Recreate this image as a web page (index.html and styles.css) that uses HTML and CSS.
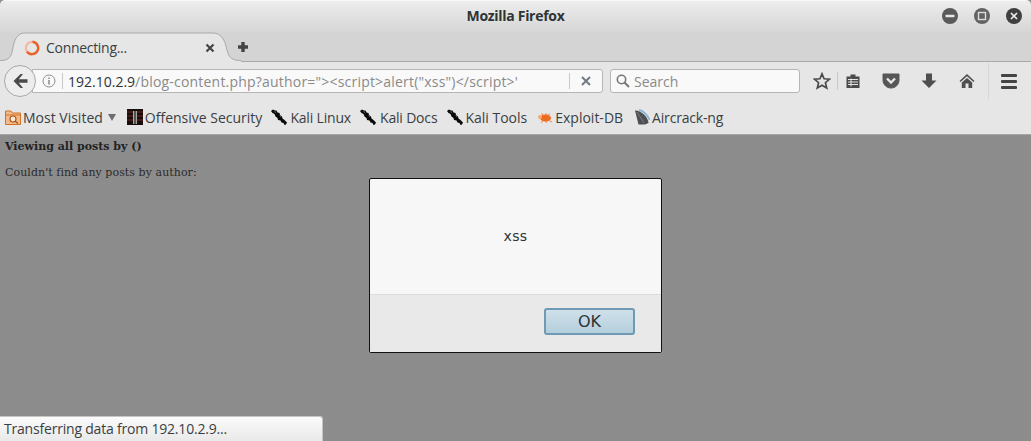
FILE: index.html
```html
<!DOCTYPE html>
<html lang="en">
<head>
<meta charset="utf-8">
<title>Mozilla Firefox</title>
<link rel="stylesheet" href="styles.css">
</head>
<body>
<svg class="defs" width="0" height="0" aria-hidden="true">
  <symbol id="kali" viewBox="0 0 16 16">
    <path d="M0 2 2 0.500 4 1.500 5.500 1.500 6.500 3.500 8.500 4 9 6 11 7.500 11.500 9.500 13.500 11 16 13.500 15 15.500 13.500 16 12.500 14 10.500 13.500 9.500 11.500 7 11 6.500 9 4.500 7.500 3.500 5 1.500 4Z" fill="#0a0a0a"/>
    <path d="M3.500 2.500 5 3.500M9 6.500 10 8" stroke="#888" stroke-width=".8" fill="none"/>
  </symbol>
</svg>
<div class="window">
  <header class="titlebar">
    <div class="title">Mozilla Firefox</div>
    <div class="winbtns">
      <span class="winbtn"><svg viewBox="0 0 16 16" width="16" height="16"><circle cx="8" cy="8" r="8" fill="#5a5a5a"/><rect x="3.500" y="6.800" width="9" height="2.400" rx=".6" fill="#e6e6e6"/></svg></span>
      <span class="winbtn"><svg viewBox="0 0 16 16" width="16" height="16"><circle cx="8" cy="8" r="8" fill="#626262"/><rect x="4.500" y="4.500" width="7" height="7" fill="none" stroke="#dcdcdc" stroke-width="1.400"/></svg></span>
      <span class="winbtn"><svg viewBox="0 0 16 16" width="16" height="16"><circle cx="8" cy="8" r="8" fill="#404040"/><path d="M5 5 11 11M11 5 5 11" stroke="#eee" stroke-width="1.700"/></svg></span>
    </div>
  </header>
  <div class="tabstrip">
    <div class="tab">
      <svg class="tabshape" viewBox="0 0 242 30" width="242" height="30"><path d="M0 28.500C8 28.500 11 26 12.500 18 14 8 17 1 25 1H213C221 1 225 8 227 18 229 26 232 28.500 241 28.500V30H0Z" fill="#e6e6e6"/><path d="M0 28.500C8 28.500 11 26 12.500 18 14 8 17 1 25 1H213C221 1 225 8 227 18 229 26 232 28.500 241 28.500" fill="none" stroke="#a9a9a9"/></svg>
      <svg class="spinner" viewBox="0 0 16 16" width="16" height="16"><circle cx="8" cy="8" r="6.200" fill="none" stroke="#f0b9a0" stroke-width="2.200"/><path d="M8.500 1.800A6.200 6.200 0 1 1 3 11.700" fill="none" stroke="#e8622c" stroke-width="2.400"/></svg>
      <span class="tablabel">Connecting...</span>
      <svg class="tabclose" viewBox="0 0 10 10" width="10" height="10"><path d="M1.500 1.500 8.500 8.500M8.500 1.500 1.500 8.500" stroke="#444" stroke-width="2.200"/></svg>
    </div>
    <svg class="newtab" viewBox="0 0 12 12" width="12" height="12"><path d="M4.300 1H7.700V4.300H11V7.700H7.700V11H4.300V7.700H1V4.300H4.300Z" fill="#444"/></svg>
  </div>
  <nav class="navbar">
    <div class="backbtn"><svg viewBox="0 0 18 18" width="18" height="18"><path d="M9.500 2 2.500 9 9.500 16H12L7.800 10.800H16.500V7.200H7.800L12 2Z" fill="#4a4a4a"/></svg></div>
    <div class="urlbar">
      <svg class="infoicon" viewBox="0 0 14 14" width="14" height="14"><circle cx="7" cy="7" r="6" fill="none" stroke="#8e8e8e"/><rect x="6.300" y="6" width="1.400" height="4.500" fill="#808080"/><rect x="6.300" y="3.500" width="1.400" height="1.500" fill="#808080"/></svg>
      <span class="vsep"></span>
      <div class="url"><span class="host">192.10.2.9</span>/blog-content.php?author="&gt;&lt;script&gt;alert("xss")&lt;/script&gt;'</div>
      <span class="vsep"></span>
      <svg class="urlclose" viewBox="0 0 10 10" width="10" height="10"><path d="M1 1 9 9M9 1 1 9" stroke="#6f7a84" stroke-width="2"/></svg>
    </div>
    <div class="searchbar">
      <svg viewBox="0 0 14 14" width="14" height="14"><circle cx="5.500" cy="5.500" r="4.200" fill="none" stroke="#777" stroke-width="1.600"/><path d="M8.500 8.500 13 13" stroke="#777" stroke-width="2"/></svg>
      <span class="searchtext">Search</span>
    </div>
    <div class="tools">
      <svg class="t-star" viewBox="0 0 18 18" width="18" height="18"><path d="M9 1.800 11.100 6.800 16.500 7.200 12.400 10.700 13.700 16 9 13.200 4.300 16 5.600 10.700 1.500 7.200 6.900 6.800Z" fill="none" stroke="#4a4a4a" stroke-width="1.700"/></svg>
      <span class="t-sep"></span>
      <svg class="t-list" viewBox="0 0 16 16" width="16" height="16"><path d="M1.500 3.500H5.500V1.500H10.500V3.500H14.500V15H1.500Z" fill="#4a4a4a"/><path d="M3 6.500H13M3 9H13M3 11.500H13M6 5.500V13.500" stroke="#e6e6e6"/></svg>
      <svg class="t-pocket" viewBox="0 0 18 16" width="18" height="16"><path d="M1 1H17V7C17 12 13 15 9 15 5 15 1 12 1 7Z" fill="#575757" stroke="#575757" stroke-linejoin="round"/><path d="M5 5.500 9 9.500 13 5.500" fill="none" stroke="#e6e6e6" stroke-width="2.400"/></svg>
      <svg class="t-down" viewBox="0 0 16 16" width="16" height="16"><path d="M5 0.500H11V7.500H15.500L8 15 .5 7.500H5Z" fill="#4f4f4f"/></svg>
      <svg class="t-home" viewBox="0 0 16 16" width="16" height="16"><path d="M8 1 .5 8 1.500 9 8 3.200 14.500 9 15.500 8Z" fill="#4f4f4f"/><path d="M2.800 9.500 8 5 13.200 9.500V15H9.500V10.500H6.500V15H2.800Z" fill="#4f4f4f"/></svg>
      <span class="t-sep t-sep-tall"></span>
      <div class="t-menu"><span></span><span></span><span></span></div>
    </div>
  </nav>
  <div class="bookmarks">
    <div class="bm bm-most">
      <svg viewBox="0 0 16 16" width="16" height="16"><path d="M.5 2H6L7.500 4H15.500V15.500H.5Z" fill="#f3b98a" stroke="#cf7428"/><path d="M.5 6H15.500" stroke="#cf7428"/><circle cx="8" cy="10" r="3" fill="#fbe9d8" stroke="#a85514" stroke-width="1.100"/><path d="M10.200 12.200 13 14.500" stroke="#a85514" stroke-width="1.400"/></svg>
      <span>Most Visited</span>
      <svg class="caret" viewBox="0 0 8 7" width="8" height="7"><path d="M0 0H8L4 7Z" fill="#6e6e6e"/></svg>
    </div>
    <div class="bm bm-off">
      <svg viewBox="0 0 16 16" width="16" height="16"><rect width="16" height="16" fill="#1a0d0d"/><path d="M0 3H16M0 7H16M0 11H16" stroke="#6a2a20"/><path d="M6 1H10L9.500 15H8.700L8 7 7.300 15H6.500Z" fill="#111"/><path d="M6.800 2V15M9.200 2V15" stroke="#e8e8e8"/></svg>
      <span>Offensive Security</span>
    </div>
    <div class="bm bm-tight bm-linux"><svg width="16" height="16"><use href="#kali"/></svg><span>Kali Linux</span></div>
    <div class="bm bm-tight bm-docs"><svg width="16" height="16"><use href="#kali"/></svg><span>Kali Docs</span></div>
    <div class="bm bm-tools"><svg width="16" height="16"><use href="#kali"/></svg><span>Kali Tools</span></div>
    <div class="bm bm-exploit">
      <svg viewBox="0 0 16 16" width="16" height="16"><ellipse cx="8.500" cy="9" rx="5.500" ry="3.500" fill="#ee6a1e"/><circle cx="3" cy="8" r="2" fill="#f5a878"/><path d="M6 6 4.500 4M9 6 9 4M11 6 13 5M6 12 4 14M9 12 9.500 14M12 11.500 15 13" stroke="#f08a48"/></svg>
      <span>Exploit-DB</span>
    </div>
    <div class="bm bm-tight bm-air">
      <svg viewBox="0 0 16 16" width="16" height="16"><path d="M1 1.500C6 1 14 7 14.500 14L11 15.500 4.500 15.500Z" fill="#4c5054"/><path d="M5 1C9 1.500 14 6 15.500 11" fill="none" stroke="#8fb4d8" stroke-width="1.800"/><path d="M3 3 10 14" stroke="#7d7d7d"/></svg>
      <span>Aircrack-ng</span>
    </div>
  </div>
  <main class="content">
    <h4 class="heading">Viewing all posts by ()</h4>
    <p class="para">Couldn't find any posts by author:</p>
    <div class="overlay">
      <div class="dialog">
        <div class="dialog-body">xss</div>
        <div class="dialog-foot"><button class="okbtn" type="button">OK</button></div>
      </div>
    </div>
    <div class="status">Transferring data from 192.10.2.9...</div>
  </main>
</div>
</body>
</html>
```
FILE: styles.css
```css
* { box-sizing: border-box; }
html, body { margin: 0; padding: 0; height: 100%; overflow: hidden; background: #8c8c8c; }
body { font-family: "Open Sans", "Noto Sans", sans-serif; color: #3a3a3a; }
.defs { position: absolute; }
.window { display: flex; flex-direction: column; height: 441px; overflow: hidden; }

.titlebar {
  height: 32px; flex: none; position: relative; display: flex; justify-content: center; align-items: center;
  background: linear-gradient(#ededed, #d6d6d6);
  border-top: 1px solid #f8f8f8; border-radius: 5px 5px 0 0;
}
.title { font-size: 14px; font-weight: 700; letter-spacing: -.3px; color: #2e3436; margin-top: -2px; }
.winbtns { position: absolute; right: 9px; top: 7px; display: flex; gap: 16px; }
.winbtn { display: block; width: 16px; height: 16px; line-height: 0; }

.tabstrip {
  height: 30px; flex: none; display: flex; align-items: flex-end;
  background: #d4d4d4; border-bottom: 1px solid #a9a9a9; position: relative; z-index: 1;
}
.tab {
  position: relative; width: 215px; height: 30px; margin-bottom: -1px; display: flex; align-items: center; padding: 2px 0 0 24px; flex: none;
}
.tabshape { position: absolute; left: 0; top: 0; }
.spinner, .tablabel, .tabclose { position: relative; }
.tablabel { font-size: 14px; letter-spacing: -.3px; margin: -2px 0 0 6px; flex: 1; color: #3a3f42; }
.newtab { margin: 0 0 8px 22px; position: relative; }

.navbar { height: 38px; flex: none; background: #e6e6e6; display: flex; align-items: center; padding: 0 0 0 4px; position: relative; }
.backbtn {
  width: 32px; height: 32px; border-radius: 50%; border: 1px solid #a8a8a8; background: #ededed;
  display: flex; align-items: center; justify-content: center; position: relative; z-index: 1; flex: none;
}
.urlbar {
  width: 571px; height: 24px; margin-left: -4px; padding-left: 9px; flex: none; display: flex; align-items: center;
  background: #f9f9f9; border: 1px solid #b5b5b5; border-radius: 0 3px 3px 0;
}
.infoicon { flex: none; }
.vsep { width: 1px; height: 16px; background: #c9c9c9; flex: none; margin-left: 6px; }
.url { flex: 1; font-size: 14px; letter-spacing: .2px; color: #8a8a8a; margin-left: 5px; white-space: nowrap; overflow: hidden; }
.host { color: #2e3436; letter-spacing: 0; }
.urlclose { margin: 0 11px 0 11px; flex: none; }
.searchbar {
  width: 190px; height: 24px; margin-left: 7px; flex: none; display: flex; align-items: center; gap: 4px; padding-left: 5px;
  background: #f9f9f9; border: 1px solid #b5b5b5; border-radius: 3px;
}
.searchtext { font-size: 14px; color: #8a8a8a; }
.tools { display: flex; align-items: center; height: 38px; margin-left: 13px; }
.t-sep { width: 1px; height: 18px; background: #c9c9c9; margin: 0 7px 0 6px; flex: none; }
.t-sep-tall { height: 36px; margin: 0 12px 0 13px; background: #d6d6d6; }
.t-pocket { margin-left: 21px; }
.t-down { margin-left: 21px; }
.t-home { margin-left: 22px; }
.t-menu { display: flex; flex-direction: column; gap: 3px; width: 16px; }
.t-menu span { display: block; height: 3px; background: #444; border-radius: 1px; }

.bookmarks {
  height: 35px; flex: none; background: #e6e6e6; border-bottom: 1px solid #a5a5a5;
  display: flex; align-items: center; padding: 0 0 0 5px; font-size: 14px; color: #3a3f42;
}
.bm { display: flex; align-items: center; gap: 2px; white-space: nowrap; }
.bm-tight { letter-spacing: -.18px; }
.caret { margin-left: 3px; }
.bm-off { margin-left: 11px; }
.bm-linux { margin-left: 9px; gap: 3px; }
.bm-docs { margin-left: 9px; gap: 4px; }
.bm-tools { margin-left: 10px; }
.bm-exploit { margin-left: 10px; }
.bm-air { margin-left: 11px; gap: 2px; }

.content { flex: 1; position: relative; font-family: "DejaVu Serif", serif; font-size: 11px; color: #2a2a2a; padding: 5px; }
.content { background: repeating-conic-gradient(#8a8a8a 0 25%, #8f8f8f 0 50%) 0 0 / 2px 2px; }
.heading { margin: 0; font-size: 11px; font-weight: 700; line-height: 13px; color: #222; }
.para { margin: 13px 0 0; line-height: 13px; letter-spacing: .06px; color: #2a2a2a; }
.overlay { position: absolute; inset: 0; display: flex; justify-content: center; align-items: flex-start; padding-top: 43px; }
.dialog {
  width: 293px; height: 175px; border: 1px solid #111; border-radius: 2px; background: #f7f7f7;
  display: flex; flex-direction: column; font-family: "DejaVu Sans", sans-serif;
}
.dialog-body { height: 116px; flex: none; display: flex; align-items: center; justify-content: center; padding-bottom: 1px; font-size: 14px; letter-spacing: .4px; color: #2e3436; border-bottom: 1px solid #dcdcdc; }
.dialog-foot { flex: 1; background: #e9e9e9; display: flex; justify-content: flex-end; align-items: flex-start; padding: 13px 26px 0 0; }
.okbtn {
  width: 91px; height: 27px; padding: 0; font-family: inherit; font-size: 16px; color: #2e3436;
  border: 2px solid #6e9ab5; border-radius: 3px; background: linear-gradient(#cfe0ea, #b5cfdd);
}
.status {
  position: absolute; left: 0; bottom: 0; width: 323px; height: 25px; padding: 2px 0 0 4px;
  font-family: "Open Sans", sans-serif; font-size: 14px; letter-spacing: -.2px; line-height: 20px; color: #3a3f42;
  background: linear-gradient(#fbfbfb, #e9e9e9); border: 1px solid #c6c6c6; border-left: 0; border-bottom: 0; border-radius: 0 3px 0 0;
}
```
